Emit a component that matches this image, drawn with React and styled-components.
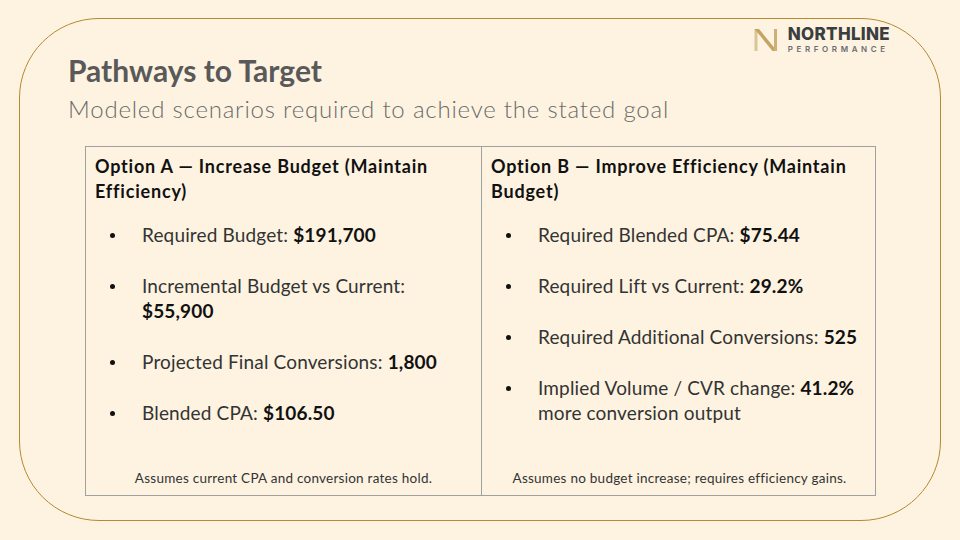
import styled, { createGlobalStyle } from "styled-components";

const GlobalStyle = createGlobalStyle`
  html, body {
    margin: 0;
    padding: 0;
    background: #fef3e1;
  }
  body {
    font-family: "Lato", "Noto Sans", sans-serif;
  }
`;

const Slide = styled.div`
  width: 960px;
  height: 540px;
  box-sizing: border-box;
  padding: 18px 19px 19px 19px;
  background: #fef3e1;
`;

const Frame = styled.div`
  height: 100%;
  box-sizing: border-box;
  border: 1.5px solid #b8882f;
  border-radius: 80px;
  padding: 34px 64px 24px 48px;
  display: flex;
  flex-direction: column;
`;

const Header = styled.header`
  display: flex;
  justify-content: space-between;
  align-items: flex-start;
`;

const Titles = styled.div`
  display: flex;
  flex-direction: column;
`;

const Title = styled.h1`
  margin: 0;
  font-size: 30px;
  font-weight: 700;
  color: #595959;
  line-height: 34px;
`;

const Subtitle = styled.p`
  margin: 6px 0 0;
  font-size: 24px;
  font-weight: 300;
  color: #6b6b6b;
  line-height: 32px;
  letter-spacing: 0.8px;
`;

const Logo = styled.div`
  display: flex;
  align-items: center;
  gap: 10px;
  margin-top: -27px;
  margin-right: -14px;
`;

const LogoText = styled.div`
  display: flex;
  flex-direction: column;
`;

const LogoName = styled.span`
  font-family: "Inter", "Lato", sans-serif;
  font-weight: 800;
  font-size: 17px;
  line-height: 17px;
  color: #3b3d40;
  letter-spacing: 0.3px;
`;

const LogoSub = styled.span`
  font-family: "Inter", "Lato", sans-serif;
  font-weight: 600;
  font-size: 8px;
  line-height: 10px;
  color: #6a6c70;
  letter-spacing: 3.6px;
  margin-top: 1px;
`;

const Table = styled.div`
  margin: 21px 0 0 17px;
  display: grid;
  grid-template-columns: 395px 396px;
  border: 1px solid #a0a0a0;
  flex: 1;
`;

const Column = styled.section`
  display: flex;
  flex-direction: column;
  padding: 7px 9px 8px 9px;
  border-left: ${(p) => (p.$first ? "none" : "1px solid #a0a0a0")};
`;

const ColHead = styled.h2`
  margin: 0;
  font-size: 18px;
  font-weight: 700;
  line-height: 25px;
  letter-spacing: 0.8px;
  color: #111;
`;

const List = styled.ul`
  margin: 18px 0 0;
  padding: 0;
  list-style: none;
  display: flex;
  flex-direction: column;
  gap: 26px;
`;

const Item = styled.li`
  position: relative;
  padding-left: 47px;
  padding-right: 8px;
  font-size: 19px;
  font-weight: 400;
  line-height: 25px;
  letter-spacing: 0.15px;
  color: #333;

  &::before {
    content: "";
    position: absolute;
    left: 15px;
    top: 11px;
    width: 5px;
    height: 5px;
    border-radius: 50%;
    background: #111;
  }

  b {
    font-weight: 700;
    color: #111;
  }
`;

const Note = styled.p`
  margin: auto 0 0;
  text-align: center;
  font-size: 13.5px;
  line-height: 18px;
  letter-spacing: 0.25px;
  color: #333;
`;

function NorthlineMark() {
  return (
    <svg width="24" height="23" viewBox="0 0 24 23">
      <rect x="0.5" y="0" width="3" height="22" fill="#dac597" />
      <polygon points="0.5,0 5,0 23,22 18.5,22" fill="#c4a463" />
      <rect x="20" y="0" width="3" height="22" fill="#cbb077" />
    </svg>
  );
}

const options = [
  {
    title: "Option A — Increase Budget (Maintain Efficiency)",
    items: [
      ["Required Budget: ", "$191,700"],
      ["Incremental Budget vs Current: ", "$55,900"],
      ["Projected Final Conversions: ", "1,800"],
      ["Blended CPA: ", "$106.50"],
    ],
    note: "Assumes current CPA and conversion rates hold.",
  },
  {
    title: "Option B — Improve Efficiency (Maintain Budget)",
    items: [
      ["Required Blended CPA: ", "$75.44"],
      ["Required Lift vs Current: ", "29.2%"],
      ["Required Additional Conversions: ", "525"],
      ["Implied Volume / CVR change: ", "41.2%", " more conversion output"],
    ],
    note: "Assumes no budget increase; requires efficiency gains.",
  },
];

export default function App() {
  return (
    <>
      <GlobalStyle />
      <Slide>
        <Frame>
          <Header>
            <Titles>
              <Title>Pathways to Target</Title>
              <Subtitle>Modeled scenarios required to achieve the stated goal</Subtitle>
            </Titles>
            <Logo>
              <NorthlineMark />
              <LogoText>
                <LogoName>NORTHLINE</LogoName>
                <LogoSub>PERFORMANCE</LogoSub>
              </LogoText>
            </Logo>
          </Header>

          <Table>
            {options.map((opt, i) => (
              <Column key={opt.title} $first={i === 0}>
                <ColHead>{opt.title}</ColHead>
                <List>
                  {opt.items.map(([label, value, tail]) => (
                    <Item key={label}>
                      {label}
                      <b>{value}</b>
                      {tail}
                    </Item>
                  ))}
                </List>
                <Note>{opt.note}</Note>
              </Column>
            ))}
          </Table>
        </Frame>
      </Slide>
    </>
  );
}
